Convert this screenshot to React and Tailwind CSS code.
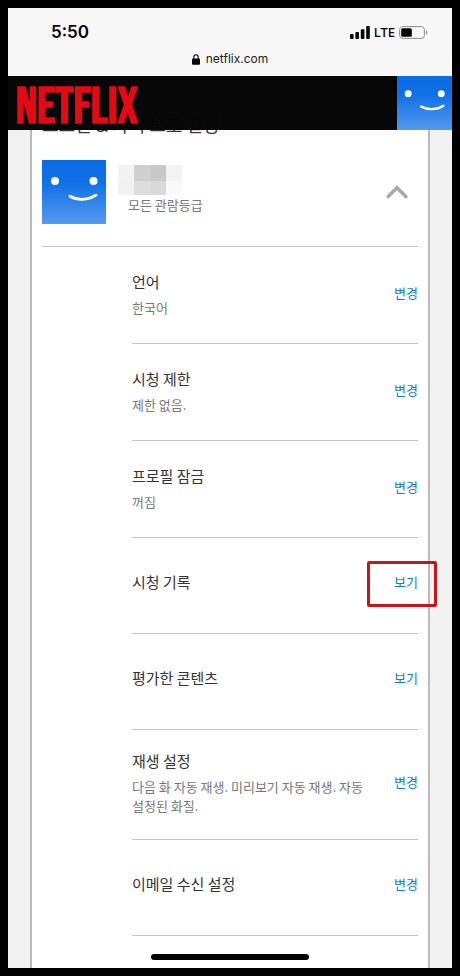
import React, { useState } from "react";

const settings = [
  { title: "언어", detail: "한국어", action: "변경" },
  { title: "시청 제한", detail: "제한 없음.", action: "변경" },
  { title: "프로필 잠금", detail: "꺼짐", action: "변경" },
  { title: "시청 기록", action: "보기", highlighted: true },
  { title: "평가한 콘텐츠", action: "보기" },
  {
    title: "재생 설정",
    detail: "다음 화 자동 재생. 미리보기 자동 재생. 자동 설정된 화질.",
    action: "변경",
    tall: true,
  },
  { title: "이메일 수신 설정", action: "변경" },
];

function Avatar({ id, className }) {
  return (
    <svg viewBox="0 0 64 64" preserveAspectRatio="none" className={className} aria-hidden="true">
      <defs>
        <linearGradient id={id} x1="0" y1="0" x2="0" y2="1">
          <stop offset="0" stopColor="#0a6de4" />
          <stop offset="0.35" stopColor="#1071e6" />
          <stop offset="1" stopColor="#5599ee" />
        </linearGradient>
      </defs>
      <rect width="64" height="64" fill={`url(#${id})`} />
      <circle cx="13" cy="21" r="4" fill="#fff" />
      <circle cx="51.5" cy="21" r="4" fill="#fff" />
      <path d="M28 36.2C35 40.5 46 40.5 54 35.2" fill="none" stroke="#fff" strokeWidth="2.8" strokeLinecap="round" />
    </svg>
  );
}

function StatusBar() {
  return (
    <div className="h-[68px] bg-[#f7f7f7] pt-3 font-['Inter',sans-serif] text-black">
      <div className="flex h-6 items-center justify-between pr-6 pl-[43px]">
        <span className="text-[17px] leading-6 font-semibold">5:50</span>
        <span className="flex items-center gap-1">
          <svg viewBox="0 0 20 13" className="h-[13px] w-5" aria-hidden="true">
            <rect x="0" y="8" width="3.6" height="5" rx="1" />
            <rect x="5.4" y="6" width="3.6" height="7" rx="1" />
            <rect x="10.8" y="3.2" width="3.6" height="9.8" rx="1" />
            <rect x="16.2" y="0" width="3.6" height="13" rx="1" />
          </svg>
          <span className="font-['Noto_Sans',sans-serif] text-[13px] leading-6 font-medium">LTE</span>
          <svg viewBox="0 0 29 13" className="h-[13px] w-[29px]" aria-hidden="true">
            <rect x="0.6" y="0.6" width="24.8" height="11.8" rx="3" fill="none" stroke="#8d8d8d" strokeWidth="1" />
            <rect x="2.2" y="2.2" width="10.6" height="8.6" rx="1.5" />
            <path d="M27 4.3c1.7.6 1.7 3.8 0 4.4z" fill="#8d8d8d" />
          </svg>
        </span>
      </div>
      <div className="flex h-[30px] items-center justify-center gap-[6px]">
        <svg viewBox="0 0 8 11" className="h-[11px] w-2" aria-hidden="true">
          <rect x="0" y="4.6" width="8" height="6.2" rx="1" />
          <path d="M1.8 5V3.2a2.2 2.4 0 0 1 4.4 0V5" fill="none" stroke="#000" strokeWidth="1.1" />
        </svg>
        <span className="text-[12px] leading-5 text-[#222]">netflix.com</span>
      </div>
    </div>
  );
}

function SettingRow({ title, detail, action, highlighted, tall }) {
  const spacing = tall ? "pt-[19px] pb-6" : detail ? "min-h-[97px] pb-1" : "min-h-24 pb-2";
  return (
    <li className={`flex items-center justify-between gap-6 border-b border-[#c4c4c4] ${spacing}`}>
      <div>
        <h3 className="text-[15px] leading-6 text-[#333]">{title}</h3>
        {detail && <p className="mt-1 text-[13px] leading-[19px] text-[#777]">{detail}</p>}
      </div>
      <a href="#" className="relative shrink-0 text-[13px] leading-5 text-[#0d7cd2]">
        {action}
        {highlighted && (
          <span className="absolute -top-[11px] -right-[19px] -bottom-[15px] -left-[27px] rounded-xs border-3 border-[#c8151b]" />
        )}
      </a>
    </li>
  );
}

export default function App() {
  const [open, setOpen] = useState(true);
  return (
    <div className="relative flex min-h-screen flex-col border-8 border-black bg-[#f2f2f2] font-['Noto_Sans_CJK_KR',sans-serif]">
      <StatusBar />
      <header className="sticky top-0 z-10 flex h-[54px] items-center justify-between bg-[#050505]/99 pl-2">
        <a
          href="#"
          className="pt-[10px] font-['Bebas_Neue','Roboto_Condensed','Open_Sans_Condensed','Noto_Sans_Condensed','Liberation_Sans',sans-serif] text-[50px] leading-[54px] font-bold text-[#e50914]"
        >
          NETFLIX
        </a>
        <Avatar id="header-avatar" className="h-[54px] w-[55px]" />
      </header>
      <main className="mx-[22px] -mt-5 flex-1 border-x-2 border-[#b9b9b9] bg-white px-[10px]">
        <h2 className="text-[18px] leading-7 text-[#333]">프로필 &amp; 자녀 보호 설정</h2>
        <section className="flex h-[109px] items-start border-b border-[#c4c4c4] pt-[22px]">
          <Avatar id="profile-avatar" className="size-16" />
          <div className="ml-3 flex-1 pt-[5px]">
            <div className="grid w-16 grid-cols-4">
              <span className="h-4 bg-[#f2f2f2]" />
              <span className="h-4 bg-[#cfcfcf]" />
              <span className="h-4 bg-[#c8c8c8]" />
              <span className="h-4 bg-[#f3f3f3]" />
              <span className="h-[14px] bg-[#f1f1f1]" />
              <span className="h-[14px] bg-[#dcdcdc]" />
              <span className="h-[14px] bg-[#d9d9d9]" />
              <span className="h-[14px] bg-[#f9f9f9]" />
            </div>
            <p className="pl-[10px] text-[13px] leading-5 text-[#777]">모든 관람등급</p>
          </div>
          <button
            type="button"
            aria-label="프로필 설정"
            aria-expanded={open}
            onClick={() => setOpen(!open)}
            className="mr-[10px] flex h-16 items-center"
          >
            <svg viewBox="0 0 22 14" className="h-[14px] w-[22px]" aria-hidden="true">
              <path d="M2.2 11.6 11 2.8l8.8 8.8" fill="none" stroke="#a9a9a9" strokeWidth="3.6" strokeLinecap="round" />
            </svg>
          </button>
        </section>
        {open && (
          <ul className="pl-[90px]">
            {settings.map((s) => (
              <SettingRow key={s.title} {...s} />
            ))}
          </ul>
        )}
      </main>
      <div className="absolute inset-x-0 bottom-2 flex justify-center">
        <span className="h-[6px] w-[158px] rounded-full bg-black" />
      </div>
    </div>
  );
}
